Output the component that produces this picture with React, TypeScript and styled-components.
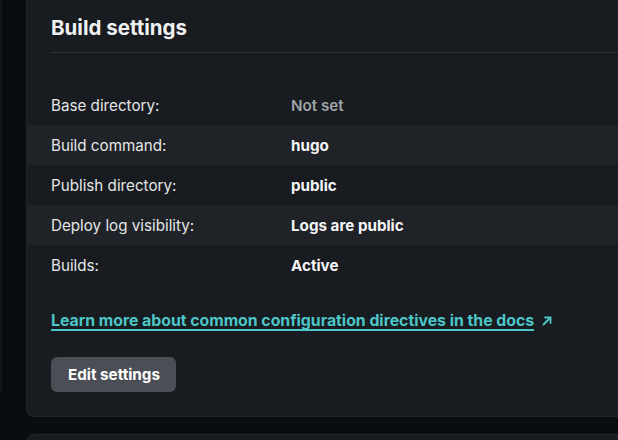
import styled, { createGlobalStyle } from 'styled-components';

const GlobalStyle = createGlobalStyle`
  html, body {
    margin: 0;
    padding: 0;
    background: #0a0d10;
    overflow: hidden;
  }
  body {
    font-family: Inter, "Noto Sans", "Liberation Sans", sans-serif;
    -webkit-font-smoothing: antialiased;
  }
`;

interface Setting {
  label: string;
  value: string;
  muted?: boolean;
}

const settings: Setting[] = [
  { label: 'Base directory:', value: 'Not set', muted: true },
  { label: 'Build command:', value: 'hugo' },
  { label: 'Publish directory:', value: 'public' },
  { label: 'Deploy log visibility:', value: 'Logs are public' },
  { label: 'Builds:', value: 'Active' },
];

const ExternalArrow = () => (
  <svg width="12" height="12" viewBox="0 0 12 12" fill="none" stroke="currentColor" strokeWidth="1.8" strokeLinecap="round" strokeLinejoin="round">
    <path d="M2.5 9.5 L9.5 2.5" />
    <path d="M4 2.5 H9.5 V8" />
  </svg>
);

const App = () => {
  return (
    <>
      <GlobalStyle />
      <Page>
        <SidePanel />
        <Column>
          <Card>
            <Header>
              <Title>Build settings</Title>
            </Header>
            <SettingsList>
              {settings.map((s) => (
                <Row key={s.label}>
                  <Label>{s.label}</Label>
                  <Value $muted={s.muted}>{s.value}</Value>
                </Row>
              ))}
            </SettingsList>
            <Footer>
              <DocsLink href="#">
                <span>Learn more about common configuration directives in the docs</span>
                <ExternalArrow />
              </DocsLink>
              <EditButton>Edit settings</EditButton>
            </Footer>
          </Card>
          <NextCard />
        </Column>
      </Page>
    </>
  );
};

const Page = styled.div`
  display: flex;
  align-items: flex-start;
  width: 618px;
  height: 440px;
  overflow: hidden;
`;

const SidePanel = styled.div`
  flex: none;
  width: 2px;
  height: 393px;
  margin-right: 24px;
  background: #121519;
  border-bottom-right-radius: 2px;
`;

const Column = styled.div`
  flex: none;
  display: flex;
  flex-direction: column;
  gap: 17px;
  width: 640px;
`;

const Card = styled.section`
  background: #181b1f;
  border: 1px solid #22262a;
  border-top: none;
  border-radius: 0 0 8px 8px;
  padding-bottom: 24px;
`;

const Header = styled.div`
  margin-left: 24px;
  padding: 13px 0 10px;
  border-bottom: 1px solid #2c3035;
`;

const Title = styled.h2`
  margin: 0;
  color: #eef0f2;
  font-size: 20.5px;
  font-weight: 700;
  line-height: 29px;
`;

const SettingsList = styled.div`
  display: flex;
  flex-direction: column;
  margin-top: 32px;
`;

const Row = styled.div`
  display: flex;
  align-items: center;
  height: 40px;
  padding-left: 24px;
  font-size: 15.2px;

  &:nth-child(even) {
    background: #1f2226;
  }
`;

const Label = styled.span`
  width: 240px;
  flex: none;
  color: #e4e6e8;
`;

const Value = styled.span<{ $muted?: boolean }>`
  color: ${(p) => (p.$muted ? '#9ea3a8' : '#f4f5f6')};
  font-weight: ${(p) => (p.$muted ? 600 : 700)};
`;

const Footer = styled.div`
  display: flex;
  flex-direction: column;
  align-items: flex-start;
  gap: 24px;
  padding: 24px 0 0 24px;
`;

const DocsLink = styled.a`
  display: inline-flex;
  align-items: center;
  gap: 7px;
  line-height: 24px;
  font-size: 15.8px;
  font-weight: 700;
  color: #4cc6c8;
  text-decoration: none;

  span {
    text-decoration: underline;
    text-underline-offset: 3px;
    text-decoration-thickness: 2px;
  }
`;

const EditButton = styled.button`
  height: 35px;
  padding: 0 16px 0 17px;
  border: none;
  border-radius: 6px;
  background: #4b4f55;
  color: #ffffff;
  font-family: inherit;
  font-size: 15.2px;
  font-weight: 700;
  cursor: pointer;
`;

const NextCard = styled.div`
  height: 40px;
  background: #181b1f;
  border: 1px solid #22262a;
  border-radius: 8px 8px 0 0;
`;

export default App;
